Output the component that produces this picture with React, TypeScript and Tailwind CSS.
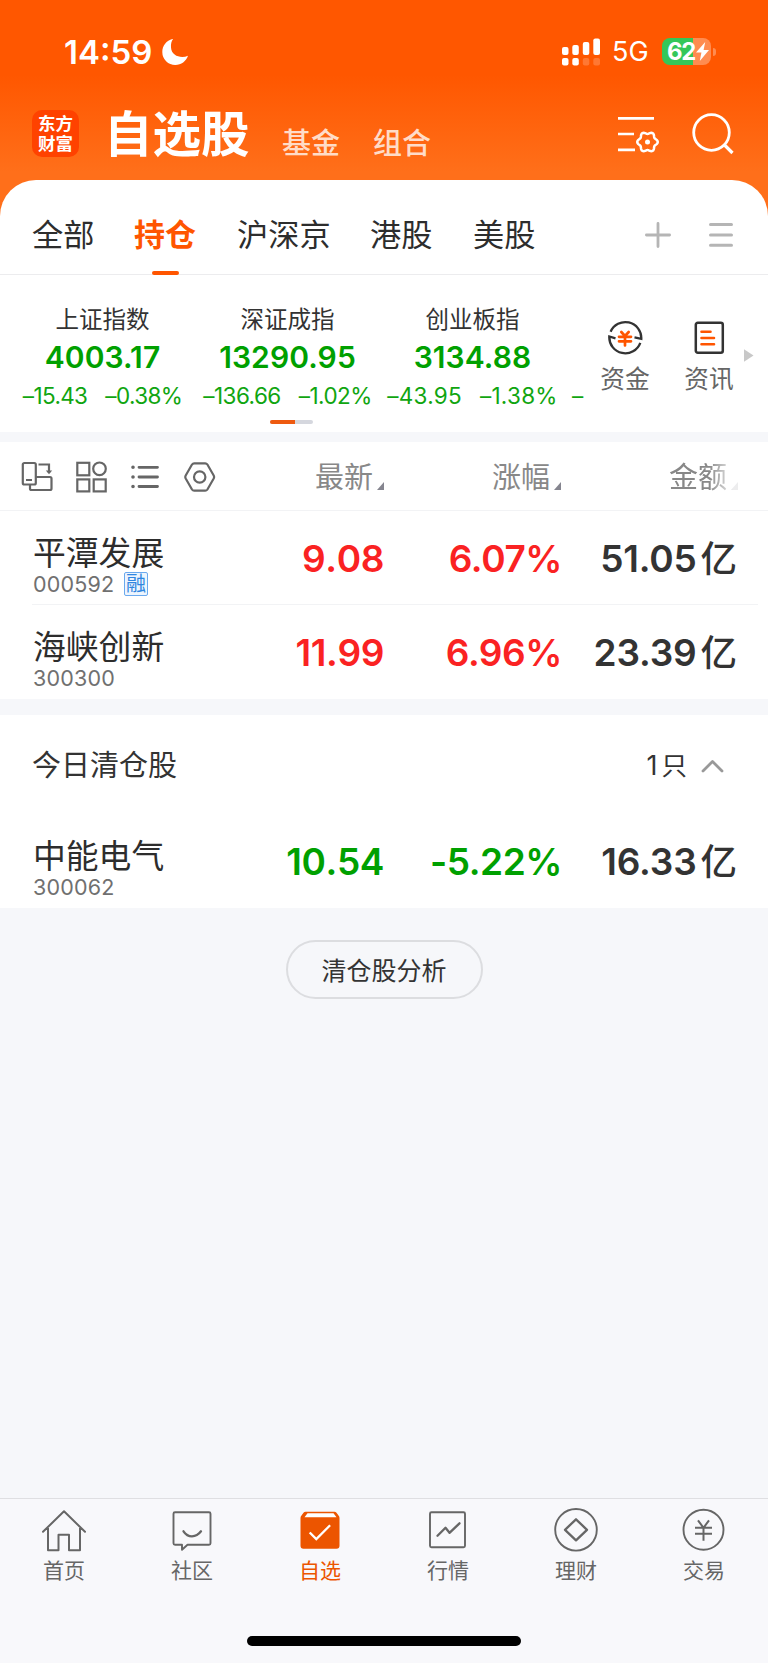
import React from "react";

const FONT = "font-['Inter','Noto_Sans_CJK_SC',sans-serif]";

function StatusBar() {
  return (
    <div className="flex h-[103px] items-center text-white">
      <div className="ml-[64px] w-[97px] whitespace-nowrap text-[33px] font-semibold leading-[40px] tracking-[0px]">14:59</div>
      <svg className="h-[28px] w-[28px]" viewBox="0 0 28 28" fill="#fff">
        <path d="M11.500 1C5.500 2.600 1.300 7.500 1.300 14a13 13 0 0 0 13 13c6 0 10.800-3.600 12.700-9.200-7 3-16.500.2-17-8.300C9.800 6 10.400 3.200 12 1.300z" />
      </svg>
      <svg className="ml-[373px] h-[28px] w-[39px]" viewBox="0 0 39 28" fill="#fff">
        <rect x="0" y="9" width="6.500" height="8" rx="2" />
        <rect x="10.300" y="7" width="6.500" height="10" rx="2" />
        <rect x="20.800" y="4" width="6.500" height="13" rx="2" />
        <rect x="31.300" y="0.500" width="6.700" height="16.500" rx="2" />
        <rect x="0" y="20" width="6.500" height="7.500" rx="2" />
        <rect x="10.300" y="20" width="6.500" height="7.500" rx="2" />
        <rect x="20.800" y="20" width="6.500" height="7.500" rx="2" opacity=".2" />
        <rect x="31.300" y="20" width="6.700" height="7.500" rx="2" opacity=".2" />
      </svg>
      <div className="ml-[11px] mt-[1px] w-[50px] whitespace-nowrap text-[27px] leading-[32px]">5G</div>
      <div className="flex h-[27px] w-[49px] items-center rounded-[8px] bg-[linear-gradient(90deg,#34c759_0_31px,#ff8c50_31px)]">
        <span className="ml-[5px] text-[24px] font-bold leading-[27px] tracking-[-1.300px]">62</span>
        <svg className="ml-[1px] h-[19px] w-[13px]" viewBox="0 0 12 19" preserveAspectRatio="none" fill="#fff">
          <path d="M8.500 0 0 10.500h5L3.500 19 12 8H7z" />
        </svg>
      </div>
      <div className="ml-[2px] h-[8px] w-[3px] rounded-r-full bg-[#ff8c50]" />
    </div>
  );
}

const gearPoints = Array.from({ length: 96 }, (_, i) => {
  const a = (i / 96) * Math.PI * 2;
  const r = 9.15 + 1.1 * Math.cos(6 * a);
  return `${(r * Math.cos(a)).toFixed(2)},${(r * Math.sin(a)).toFixed(2)}`;
}).join(" ");

function TitleBar() {
  const sub = "mt-[23px] whitespace-nowrap text-[29px] font-medium leading-[36px] text-[#ffdcc8]";
  return (
    <div className="flex h-[77px] text-white">
      <div className="ml-[32px] mt-[7px] flex h-[47px] w-[47px] flex-col items-center justify-center rounded-[10px] bg-[#ff4200] text-[17.500px] font-bold leading-[20px]">
        <span>东方</span>
        <span>财富</span>
      </div>
      <h1 className="ml-[25px] mt-[2px] w-[178px] whitespace-nowrap text-[48.500px] font-bold leading-[60px]">自选股</h1>
      <div className={`${sub} w-[91px]`}>基金</div>
      <div className={`${sub} w-[245px]`}>组合</div>
      <svg className="mt-[12px] h-[39px] w-[44px]" viewBox="0 0 44 39" fill="none" stroke="#fff" strokeWidth="2.700">
        <path d="M0 3.300h36M0 19h16M0 34.800h17" />
        <g transform="translate(29.500 27)">
          <polygon points={gearPoints} strokeWidth="2.500" strokeLinejoin="round" />
          <circle r="2.500" fill="#fff" stroke="none" />
        </g>
      </svg>
      <svg className="ml-[30px] mt-[9px] h-[43px] w-[43px]" viewBox="0 0 43 43" fill="none" stroke="#fff" strokeWidth="2.800">
        <circle cx="19.500" cy="20.500" r="17.800" />
        <path d="m32 32.500 8.500 8.500" strokeWidth="3.200" />
      </svg>
    </div>
  );
}

function MarketTabs() {
  const tab = "mt-[35px] whitespace-nowrap text-[31.200px] leading-[40px] text-[#2d2d2d]";
  return (
    <div className="flex h-[95px] rounded-t-[36px] border-b border-[#ececee] bg-white pl-[32px]">
      <div className={`${tab} w-[102px]`}>全部</div>
      <div className="flex w-[103px] flex-col">
        <span className="mt-[35px] whitespace-nowrap text-[31px] font-bold leading-[40px] text-[#ff5500]">持仓</span>
        <span className="ml-[18px] mt-[16px] h-[4px] w-[27px] shrink-0 rounded-full bg-[#ff5500]" />
      </div>
      <div className={`${tab} w-[133px]`}>沪深京</div>
      <div className={`${tab} w-[103px]`}>港股</div>
      <div className={`${tab} w-[172px]`}>美股</div>
      <svg className="mt-[42px] h-[26px] w-[26px]" viewBox="0 0 26 26" stroke="#b5b5b5" strokeWidth="2.800" strokeLinecap="round">
        <path d="M1.400 13h23.200M13 1.400v23.200" />
      </svg>
      <svg className="ml-[38px] mt-[42px] h-[26px] w-[24px]" viewBox="0 0 24 26" stroke="#b5b5b5" strokeWidth="3" strokeLinecap="round">
        <path d="M1.500 2.600h21M1.500 13h21M1.500 23.200h21" />
      </svg>
    </div>
  );
}

const indices = [
  { name: "上证指数", value: "4003.17", diff: "–15.43", pct: "–0.38%", track: "tracking-[-0.650px]" },
  { name: "深证成指", value: "13290.95", diff: "–136.66", pct: "–1.02%", track: "tracking-[-0.550px]" },
  { name: "创业板指", value: "3134.88", diff: "–43.95", pct: "–1.38%", track: "tracking-[0.250px]" },
];

function IndexStrip() {
  return (
    <div className="flex h-[157px] bg-white">
      <div className="flex w-[584px] flex-col overflow-hidden">
        <div className="flex h-[146px] pl-[10px] pt-[30px]">
          {indices.map((item) => (
            <div key={item.name} className="flex w-[185px] shrink-0 flex-col items-center whitespace-nowrap">
              <span className="text-[23.500px] leading-[30px] text-[#333]">{item.name}</span>
              <span className="mt-[2px] text-[30px] font-semibold leading-[40px] tracking-[0.100px] text-[#00a000]">{item.value}</span>
              <div className={`mt-[4px] flex gap-[18px] text-[22.500px] leading-[30px] text-[#10a510] ${item.track}`}>
                <span>{item.diff}</span>
                <span>{item.pct}</span>
              </div>
            </div>
          ))}
          <span className="ml-[7px] mt-[76px] text-[22.500px] leading-[30px] text-[#10a510]">–</span>
        </div>
        <div className="ml-[270px] flex h-[4px] w-[43px] -translate-y-px overflow-hidden rounded-full bg-[#d5d7de]">
          <span className="w-[25px] bg-[#ee5a10]" />
        </div>
      </div>
      <div className="flex w-[82px] flex-col items-center pt-[45px]">
        <svg className="h-[36px] w-[36px]" viewBox="0 0 36 36" fill="none" stroke="#333" strokeWidth="2.300">
          <path d="M3.600 11.800A16 16 0 0 1 34.300 18.800L27.500 17.300M33.300 22.800A16 16 0 0 1 2.300 16.500L8.500 18.300" />
          <g stroke="#ff5500" strokeWidth="2.700" strokeLinecap="round">
            <path d="m14.300 12 3.700 4 3.700-4M12 16.800h12M12 21.300h12M18 16.500v9" />
          </g>
        </svg>
        <span className="mt-[8px] text-[24.700px] leading-[30px] text-[#666]">资金</span>
      </div>
      <div className="ml-[2px] flex w-[82px] flex-col items-center pt-[45px]">
        <svg className="h-[36px] w-[32px]" viewBox="0 0 32 36" fill="none" stroke="#333" strokeWidth="2.500">
          <rect x="2.800" y="2.800" width="27" height="30" rx="2" />
          <path stroke="#ff5500" strokeWidth="2.600" strokeLinecap="round" d="M8.500 11.700h9M8.500 18h12.500M8.500 24.300h12.500" />
        </svg>
        <span className="mt-[8px] text-[24.700px] leading-[30px] text-[#666]">资讯</span>
      </div>
      <svg className="ml-[-6px] mt-[74px] h-[13px] w-[10px]" viewBox="0 0 10 13" fill="#c8c8c8">
        <path d="M0 0.300 9.500 6.500 0 12.700z" />
      </svg>
    </div>
  );
}

function Corner() {
  return (
    <svg className="ml-[4px] mt-[20px] h-[8px] w-[7px]" viewBox="0 0 7 8" fill="#85858f">
      <path d="M7 0v8H0z" />
    </svg>
  );
}

function ColumnHeader() {
  const label = "mt-[4px] text-[29px] leading-[36px] text-[#888]";
  return (
    <div className="flex h-[69px] items-center border-b border-[#f2f3f5] bg-white pl-[20px]">
      <svg className="mt-[2px] h-[32px] w-[33px]" viewBox="0 0 33 32" fill="none" stroke="#666" strokeWidth="2.200">
        <rect x="2.800" y="2" width="13" height="21.500" rx="1.500" />
        <path d="M10 24v3.500q0 1.500 1.500 1.500h18.500q1.500 0 1.500-1.500V17.500q0-1.500-1.500-1.500H16M6 19h6M18.500 3.500h10.500v8.500" />
        <path d="M25.800 9.500h6.400L29 13.200z" fill="#666" stroke="none" />
      </svg>
      <svg className="ml-[22px] mt-[1px] h-[32px] w-[32px]" viewBox="0 0 32 32" fill="none" stroke="#666" strokeWidth="2.200">
        <rect x="2.300" y="1.800" width="12" height="12.500" />
        <circle cx="24.500" cy="7.800" r="6.300" />
        <rect x="2.300" y="18.400" width="12" height="12" />
        <rect x="18.700" y="18.400" width="12" height="12" />
      </svg>
      <svg className="ml-[24px] mt-[1px] h-[28px] w-[30px]" viewBox="0 0 30 28" fill="none" stroke="#666" strokeWidth="2.800" strokeLinecap="round">
        <path d="M8 4.300h18.500M8 14h18.500M8 23.500h18.500" />
        <path strokeWidth="3.600" d="M2 4.300h.01M2 14h.01M2 23.500h.01" />
      </svg>
      <svg className="ml-[23px] mt-[2px] h-[32px] w-[32px]" viewBox="0 0 32 32" fill="none" stroke="#666" strokeWidth="2.200" strokeLinejoin="round">
        <path d="M8 3.500q.8-1.200 2.200-1.200h11q1.400 0 2.200 1.200l6.300 11q.8 1.500 0 3l-6.300 11q-.8 1.200-2.200 1.200h-11q-1.400 0-2.200-1.200L1.700 17.500q-.8-1.500 0-3z" />
        <circle cx="15.700" cy="16" r="5.700" />
      </svg>
      <div className="flex w-[168px] items-center justify-end">
        <span className={label}>最新</span>
        <Corner />
      </div>
      <div className="flex w-[177px] items-center justify-end">
        <span className={label}>涨幅</span>
        <Corner />
      </div>
      <div className="flex w-[177px] items-center justify-end [mask-image:linear-gradient(90deg,#000_0_148px,rgba(0,0,0,0.150)_172px)]">
        <span className={label}>金额</span>
        <Corner />
      </div>
    </div>
  );
}

type Stock = { name: string; code: string; price: string; pct: string; amount: string; up: boolean; margin?: boolean };

function StockRow({ s, last }: { s: Stock; last?: boolean }) {
  const tone = s.up ? "text-[#fa2222]" : "text-[#00a000]";
  const edge = last ? "" : "border-b border-[#f2f3f5]";
  const figure = "whitespace-nowrap text-right text-[37px] font-semibold leading-[44px]";
  return (
    <div className="bg-white pl-[32px] pr-[10px]">
      <div className={`flex h-[94px] ${edge}`}>
        <div className="w-[192px] pl-[1px] pt-[24px]">
          <div className="whitespace-nowrap text-[32.800px] leading-[36px] text-[#2d2d2d]">{s.name}</div>
          <div className="flex h-[25px] items-center">
            <span className="w-[82px] text-[21.500px] leading-[24px] tracking-[0.200px] text-[#707070]">{s.code}</span>
            {s.margin && (
              <span className="ml-[9px] flex h-[24px] w-[24px] items-center justify-center rounded-[2px] border border-[#6aa9ee] bg-[#edf5fe] text-[20px] leading-[22px] text-[#2f86e0]">融</span>
            )}
          </div>
        </div>
        <div className={`${figure} ${tone} w-[160px] pt-[26px] tracking-[-0.400px] [font-kerning:none]`}>{s.price}</div>
        <div className={`${figure} ${tone} w-[178px] pt-[26px] tracking-[-0.450px]`}>{s.pct}</div>
        <div className="flex w-[175px] items-start justify-end whitespace-nowrap pt-[26px] text-[#333]">
          <span className="text-[37px] font-semibold leading-[44px] tracking-[-0.200px]">{s.amount}</span>
          <span className="ml-[4px] text-[36.500px] font-medium leading-[44px]">亿</span>
        </div>
      </div>
    </div>
  );
}

function NavItem({ label, active, children }: { label: string; active?: boolean; children: React.ReactNode }) {
  const tone = active ? "text-[#ec5500]" : "text-[#666]";
  return (
    <div className={`flex flex-1 flex-col items-center pt-[8px] ${tone}`}>
      <svg className="h-[46px] w-[46px]" viewBox="0 -2.300 46 46" fill="none" stroke="currentColor" strokeWidth="1.900" strokeLinejoin="round" strokeLinecap="round">
        {children}
      </svg>
      <span className="mt-[4px] text-[21px] leading-[28px]">{label}</span>
    </div>
  );
}

export default function App() {
  return (
    <div className={`${FONT} flex h-[1663px] w-[768px] flex-col overflow-hidden bg-[#f6f7fa]`}>
      <header className="bg-[linear-gradient(180deg,#ff5700_0,#ff5700_75px,#ff6f1a_172px)]">
        <StatusBar />
        <TitleBar />
        <MarketTabs />
      </header>
      <IndexStrip />
      <div className="h-[10px] shrink-0" />
      <ColumnHeader />
      <StockRow s={{ name: "平潭发展", code: "000592", price: "9.08", pct: "6.07%", amount: "51.05", up: true, margin: true }} />
      <StockRow last s={{ name: "海峡创新", code: "300300", price: "11.99", pct: "6.96%", amount: "23.39", up: true }} />
      <div className="h-[16px] shrink-0" />
      <div className="flex h-[99px] shrink-0 items-center bg-white pl-[32px] pr-[44px] pt-[3px] text-[#333]">
        <span className="flex-1 text-[29px] leading-[40px]">今日清仓股</span>
        <span className="text-[27px] leading-[36px]">1</span>
        <span className="ml-[4px] text-[25.500px] leading-[36px]">只</span>
        <svg className="ml-[14px] h-[14px] w-[23px]" viewBox="0 0 23 14" fill="none" stroke="#999" strokeWidth="2.800" strokeLinecap="round" strokeLinejoin="round">
          <path d="m2 12 9.500-9.500L21 12" />
        </svg>
      </div>
      <StockRow last s={{ name: "中能电气", code: "300062", price: "10.54", pct: "-5.22%", amount: "16.33", up: false }} />
      <div className="flex flex-1 justify-center pt-[32px]">
        <button className="h-[59px] w-[197px] rounded-full border-2 border-[#dcdde0] pt-[2px] text-[25px] leading-[34px] text-[#333]">清仓股分析</button>
      </div>
      <nav className="flex h-[138px] shrink-0 border-t border-[#dfdfe2] bg-[#f8f8fb]">
        <NavItem label="首页">
          <path strokeWidth="2" d="M2 22.500 23 2l21 20.500M7 19v22h10.500V25.500h10.500V41H39V19" />
        </NavItem>
        <NavItem label="社区">
          <path d="M6 3h34q1.500 0 1.500 1.500v29.500q0 1.500-1.500 1.500H18.500L13 40.500v-5H6q-1.500 0-1.500-1.500V4.500Q4.500 3 6 3z" />
          <path strokeWidth="2.300" d="M14.500 22q3.300 5 8.500 5t9-5" />
        </NavItem>
        <NavItem label="自选" active>
          <path fill="currentColor" stroke="none" d="M8.500 2.500h29q1.200 0 2 1l2.200 3q.8 1 .8 2.200V36.500q0 3-3 3h-33q-3 0-3-3V8.700Q3.500 7.500 4.300 6.500l2.200-3q.8-1 2-1z" />
          <path fill="#fff" stroke="none" d="M10.500 4h26l3 4H7.500z" />
          <path stroke="#fff" strokeWidth="2.300" strokeLinecap="square" strokeLinejoin="miter" d="m13.500 24 5.800 5.800 13-13" />
        </NavItem>
        <NavItem label="行情">
          <rect x="5" y="3" width="35" height="35" rx="1.500" />
          <path strokeWidth="2.300" d="m12.500 26.500 8-8 4 5 10-9.500" />
        </NavItem>
        <NavItem label="理财">
          <circle cx="23" cy="20.500" r="20.800" />
          <path strokeWidth="2.300" d="m23 10 11 10.500L23 31 12 20.500z" />
        </NavItem>
        <NavItem label="交易">
          <circle cx="22.500" cy="20.500" r="20" />
          <path strokeWidth="2" strokeLinecap="butt" d="m17 11 5.500 7.500 5.500-7.500M14 18.500h17M14 24.500h17M22.500 18.500V31.500" />
        </NavItem>
      </nav>
      <div className="flex h-[27px] shrink-0 justify-center bg-[#f8f8fb]">
        <div className="h-[10px] w-[274px] rounded-full bg-black" />
      </div>
    </div>
  );
}
